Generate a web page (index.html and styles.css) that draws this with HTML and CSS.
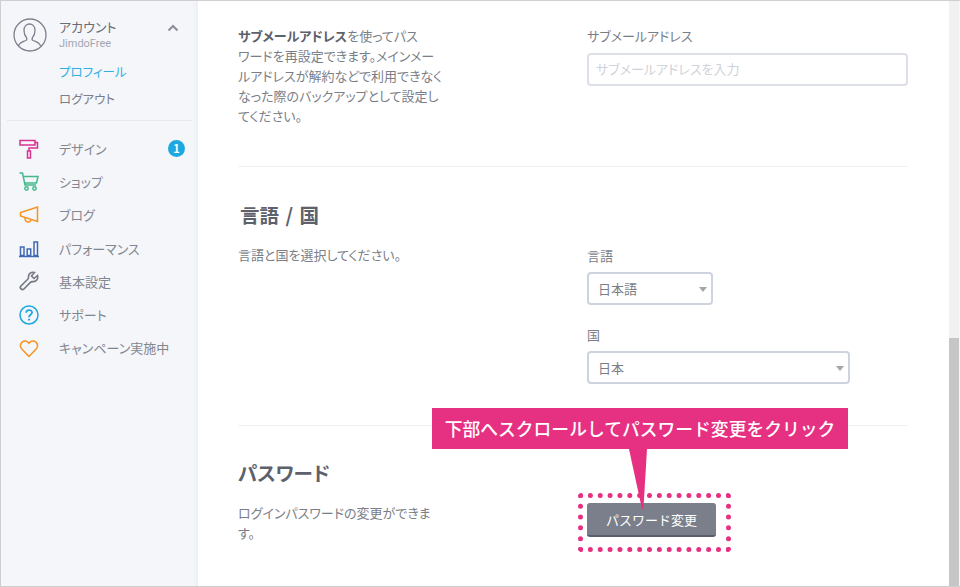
FILE: index.html
```html
<!DOCTYPE html>
<html lang="ja">
<head>
    <meta charset="UTF-8">
    <meta name="viewport" content="width=device-width, initial-scale=1.0">
    <title>アカウント</title>
    <link rel="stylesheet" href="styles.css">
</head>
<body>
    <div class="window">
        <aside class="sidebar">
            <div class="account">
                <svg class="avatar" viewBox="0 0 34 34" width="34" height="34" fill="none" stroke="#7d818d" stroke-width="1.3">
                    <circle cx="17" cy="17" r="16"/>
                    <path d="M5.5 28c1-3.5 4-4 7.5-5.5 1-.5 1-2 .5-3-1.5-1.5-2.5-4-2.5-7 0-4 2.500-6.500 5.500-6.500s5.500 2.500 5.500 6.500c0 3-1 5.500-2.500 7-.5 1-.5 2.500.5 3 3.500 1.500 6.500 2 7.500 5.500"/>
                </svg>
                <div class="account-names">
                    <div class="account-title">アカウント</div>
                    <div class="account-user">JimdoFree</div>
                </div>
                <svg class="caret" viewBox="0 0 12 8" width="12" height="8" fill="none" stroke="#8d919c" stroke-width="2.2">
                    <path d="M1.5 6.500 6 2l4.500 4.500"/>
                </svg>
            </div>
            <ul class="submenu">
                <li class="current">プロフィール</li>
                <li>ログアウト</li>
            </ul>
            <ul class="menu">
                <li>
                    <svg viewBox="0 0 20 20" width="20" height="20" fill="none" stroke="#d9308f" stroke-width="1.5">
                        <path d="M1 1.500h15v4.500H1zM16 3.500h2.500v5.500H10v3"/>
                        <path d="M8.500 12h3v7h-3z"/>
                    </svg>
                    <span>デザイン</span>
                    <b class="badge">1</b>
                </li>
                <li>
                    <svg viewBox="0 0 20 20" width="20" height="20" fill="none" stroke="#45b98c" stroke-width="1.5">
                        <path d="M.5 1h3l2.500 12h11"/>
                        <path d="M4.500 4.500h14.500l-1.500 6.500H5.500"/>
                        <circle cx="7.500" cy="16.500" r="1.700"/>
                        <circle cx="15.500" cy="16.500" r="1.700"/>
                    </svg>
                    <span>ショップ</span>
                </li>
                <li>
                    <svg viewBox="0 0 20 20" width="20" height="20" fill="none" stroke="#f7931e" stroke-width="1.5">
                        <path d="M18.500 2v14.500L1.500 11V7.500z"/>
                        <path d="M6 13c0 5 6 5 6 1.500"/>
                    </svg>
                    <span>ブログ</span>
                </li>
                <li>
                    <svg viewBox="0 0 20 20" width="20" height="20" fill="none" stroke="#3f69b0" stroke-width="1.5">
                        <path d="M1.500 9h3.500v8.500H1.500zM8.200 11h3.500v6.500H8.200zM15 4h3.500v13.500H15z"/>
                        <path d="M0 18.500h20"/>
                    </svg>
                    <span>パフォーマンス</span>
                </li>
                <li>
                    <svg viewBox="0 0 20 20" width="20" height="20" fill="none" stroke="#747884" stroke-width="1.6">
                        <path d="M18.500 4.500 15 7.500l-2.500-2.500 3-3.500c-3-1-6.500 1-6 5 0 1-.5 1.500-1 2L1.700 15.200c-1.400 1.800 1.300 4.500 3 3l6.700-6.800c.5-.5 1-.8 2-.8 4 .6 6-2.800 5.100-6.100z"/>
                    </svg>
                    <span>基本設定</span>
                </li>
                <li>
                    <svg viewBox="0 0 20 20" width="20" height="20" fill="none" stroke="#1ea7e0" stroke-width="1.5">
                        <circle cx="10" cy="10" r="9"/>
                        <path d="M7.200 7.800c0-3.600 5.800-3.600 5.800-.3 0 2.300-3 2.300-3 4.800" stroke-width="1.8"/>
                        <path d="M10 13.800v1.800" stroke-width="1.9"/>
                    </svg>
                    <span>サポート</span>
                </li>
                <li>
                    <svg viewBox="0 0 20 20" width="20" height="20" fill="none" stroke="#f7931e" stroke-width="1.5">
                        <path d="M10 18.500 2.600 10.800C-1.500 6.200 5.800-.5 10 5.300c4.200-5.800 11.500.9 7.400 5.500z"/>
                    </svg>
                    <span>キャンペーン実施中</span>
                </li>
            </ul>
        </aside>

        <main class="content">
            <section class="row row-sub">
                <div class="col-left">
                    <p><strong>サブメールアドレス</strong>を使ってパス<br>ワードを再設定できます。メインメー<br>ルアドレスが解約などで利用できなく<br>なった際のバックアップとして設定し<br>てください。</p>
                </div>
                <div class="col-right">
                    <label class="field-label">サブメールアドレス</label>
                    <div class="input">サブメールアドレスを入力</div>
                </div>
            </section>

            <section class="row-lang">
                <h2 class="heading-lang">言語 / 国</h2>
                <div class="row">
                    <div class="col-left">
                        <p>言語と国を選択してください。</p>
                    </div>
                    <div class="col-right">
                        <label class="field-label">言語</label>
                        <div class="select select-short">日本語</div>
                        <label class="field-label field-label-next">国</label>
                        <div class="select">日本</div>
                    </div>
                </div>
            </section>

            <section class="row-pass">
                <h2>パスワード</h2>
                <div class="row">
                    <div class="col-left">
                        <p>ログインパスワードの変更ができま<br>す。</p>
                    </div>
                    <div class="col-right">
                        <button class="btn-pass">パスワード変更</button>
                    </div>
                </div>
            </section>
        </main>

        <div class="scrollbar"><div class="scroll-thumb"></div></div>

        <!-- annotation over the screenshot -->
        <div class="note">下部へスクロールしてパスワード変更をクリック</div>
        <div class="note-tail"></div>
        <div class="note-ring"></div>
    </div>
</body>
</html>
```

FILE: styles.css
```css
* {
    box-sizing: border-box;
}

body {
    margin: 0;
    font-family: "Noto Sans CJK JP", "Noto Sans", sans-serif;
    font-size: 13px;
    font-feature-settings: "palt";
    color: #7a7e88;
    background-color: #fff;
}

.window {
    position: relative;
    display: flex;
    width: 960px;
    height: 587px;
    overflow: hidden;
    border-top: 1px solid #cfcfcf;
    border-bottom: 1px solid #cfcfcf;
    border-left: 1px solid #cfcfcf;
}

.sidebar {
    flex: none;
    width: 197px;
    background-color: #f4f6fa;
    box-shadow: inset -6px 0 6px -6px #e4e6ec;
}

.account {
    display: flex;
    align-items: center;
    height: 54px;
    padding: 14px 19px 0 12px;
}

.avatar {
    flex: none;
}

.account-names {
    flex: 1;
    margin-left: 12px;
}

.account-title {
    font-size: 13px;
    line-height: 18px;
    color: #686c77;
}

.account-user {
    font-size: 11px;
    line-height: 16px;
    font-family: "Roboto", sans-serif;
    color: #a3a7b2;
}

.caret {
    margin-bottom: 14px;
}

.submenu {
    list-style: none;
    margin: 0;
    padding: 3px 0 6px 58px;
    height: 69px;
}

.submenu li {
    height: 27px;
    line-height: 27px;
    font-size: 12.5px;
    color: #7a7e88;
}

.submenu li.current {
    color: #2eaee3;
}

.menu {
    list-style: none;
    margin: -4px 6px 0;
    padding: 11px 7px 0 12px;
    border-top: 1px solid #e6e8ee;
}

.menu li {
    display: flex;
    align-items: center;
    height: 33.2px;
    font-size: 13px;
    color: #82868f;
}

.menu li svg {
    flex: none;
}

.menu li span {
    flex: 1;
    margin-left: 20px;
}

.badge {
    width: 17px;
    height: 17px;
    border-radius: 50%;
    background-color: #1ea7e0;
    color: #fff;
    font-size: 11px;
    line-height: 17px;
    text-align: center;
}

.content {
    flex: 1;
    min-width: 0;
    padding: 0 41px 0 40px;
}

.row {
    display: flex;
}

.col-left {
    flex: none;
    width: 205px;
    margin-right: 144px;
}

.col-left p {
    margin: 0;
    line-height: 20px;
}

.col-left strong {
    color: #5d616c;
}

.col-right {
    flex: 1;
}

.row-sub {
    height: 166px;
    padding-top: 25px;
    border-bottom: 1px solid #f1f2f5;
}

.field-label {
    display: block;
    line-height: 20px;
}

.input {
    height: 33px;
    margin-top: 7px;
    padding-left: 7px;
    border: 2px solid #dde0e8;
    border-radius: 4px;
    line-height: 27px;
    color: #cfd2da;
}

.row-lang {
    height: 259px;
    padding-top: 34px;
    border-bottom: 1px solid #f1f2f5;
}

h2 {
    margin: 0;
    font-size: 19.5px;
    font-weight: 700;
    line-height: 28px;
    color: #5d616c;
}

.heading-lang {
    padding-left: 2px;
    word-spacing: 2px;
}

.row-lang .row {
    margin-top: 16px;
}

.row-lang .col-right {
    padding-top: 1px;
}

.select {
    position: relative;
    width: 263px;
    height: 33px;
    margin-top: 6px;
    padding-left: 9px;
    border: 2px solid #ced3e0;
    border-radius: 4px;
    line-height: 29px;
}

.select::after {
    content: "";
    position: absolute;
    top: 13px;
    right: 4px;
    border-top: 5px solid #a5a5ab;
    border-left: 4px solid transparent;
    border-right: 4px solid transparent;
}

.select-short {
    width: 126px;
}

.field-label-next {
    margin-top: 20px;
}

.row-pass {
    padding-top: 33px;
}

.row-pass .row {
    margin-top: 16px;
}

.btn-pass {
    display: block;
    width: 129px;
    height: 34px;
    border: none;
    border-bottom: 2px solid #5a5e6a;
    border-radius: 3px;
    background-color: #7b7f8c;
    color: #fff;
    font-family: inherit;
    font-size: 13px;
    font-feature-settings: normal;
}

.scrollbar {
    flex: none;
    width: 11px;
    background-color: #f1f1f1;
    border-right: 1px solid #f8f8f8;
}

.scroll-thumb {
    height: 100%;
    margin-top: 337px;
    background-color: #c6c6c6;
}

.note {
    position: absolute;
    top: 407px;
    left: 431px;
    width: 416px;
    height: 41px;
    background-color: #e63082;
    color: #fff;
    font-size: 17.8px;
    font-weight: 500;
    font-feature-settings: normal;
    line-height: 40px;
    text-align: center;
    white-space: nowrap;
}

.note-tail {
    position: absolute;
    top: 448px;
    left: 628px;
    width: 18px;
    height: 60px;
    background-color: #e63082;
    clip-path: polygon(0 0, 100% 0, 80% 100%, 72% 100%);
}

.note-ring {
    position: absolute;
    top: 492px;
    left: 577px;
    width: 153px;
    height: 59px;
    border: 5px dotted #e63082;
    border-radius: 4px;
}
```
